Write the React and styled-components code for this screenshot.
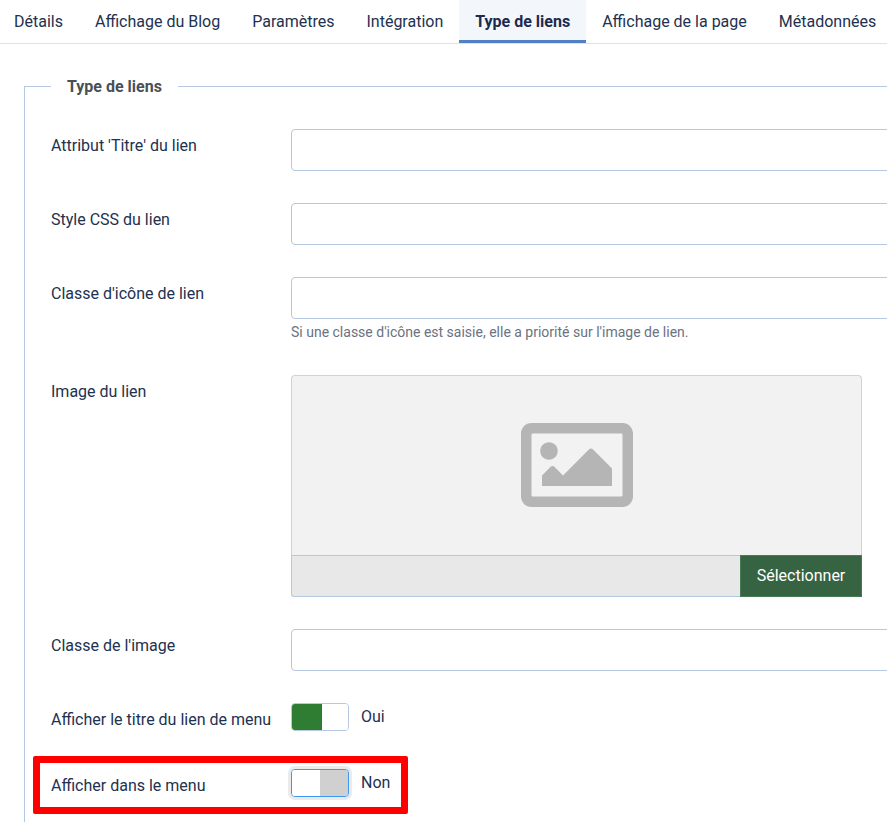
import React from "react";
import styled, { createGlobalStyle } from "styled-components";
import { FaRegImage } from "react-icons/fa";

const Global = createGlobalStyle`
  html, body { margin: 0; padding: 0; background: #fff; }
  body { font-family: Roboto, "Liberation Sans", sans-serif; font-size: 16px; line-height: 24px; color: #22314f; }
`;

const Page = styled.div`
  width: 887px;
  height: 822px;
  overflow: hidden;
`;

const TabBar = styled.nav`
  display: flex;
  width: 920px;
  height: 44px;
  margin-left: -2px;
  box-sizing: border-box;
  border-bottom: 1px solid #dfe3e9;
`;

const Tab = styled.div`
  padding: 4px 16px 0;
  height: 43px;
  box-sizing: border-box;
  display: flex;
  align-items: center;
  white-space: nowrap;
  font-weight: ${(p) => (p.$active ? 700 : 400)};
  background: ${(p) => (p.$active ? "#f3f6fa" : "transparent")};
  border-bottom: 3px solid ${(p) => (p.$active ? "#5280c4" : "transparent")};
  color: ${(p) => (p.$active ? "#1a2b4f" : "#22314f")};
`;

const Fieldset = styled.fieldset`
  margin: 29px 0 0 24px;
  width: 1000px;
  padding: 30px 26px 0;
  border: 0;
  border-top: 1px solid #b6c7e2;
  border-left: 1px solid #b6c7e2;
  box-sizing: border-box;
  min-width: 0;
`;

const Legend = styled.legend`
  margin-left: 0;
  padding: 2px 16px 0;
  font-weight: 700;
  color: #495057;
  line-height: 24px;
`;

const Row = styled.div`
  position: relative;
  display: grid;
  grid-template-columns: 240px 1fr;
  margin-bottom: ${(p) => p.$gap ?? 32}px;
`;

const Label = styled.label`
  padding-top: ${(p) => p.$top ?? 5}px;
  color: #22314f;
`;

const Input = styled.input`
  display: block;
  width: 100%;
  height: 42px;
  box-sizing: border-box;
  border: 1px solid #b6c7e2;
  border-radius: 4px;
  background: #fff;
`;

const Help = styled.div`
  font-size: 14px;
  line-height: 22px;
  margin-top: 2px;
  color: #6b7280;
`;

const MediaBox = styled.div`
  width: 571px;
  height: 222px;
  display: flex;
  flex-direction: column;
`;

const Preview = styled.div`
  flex: 1;
  display: flex;
  align-items: center;
  justify-content: center;
  box-sizing: border-box;
  padding-bottom: 2px;
  color: #b5b5b5;
  background: #f2f2f2;
  border: 1px solid #cfd2d6;
  border-bottom: 0;
  border-radius: 4px 4px 0 0;
`;

const MediaBar = styled.div`
  display: flex;
  height: 42px;
  box-sizing: border-box;
  background: #e8e8e8;
`;

const MediaPath = styled.div`
  flex: 1;
  border: 1px solid #b6c7e2;
  border-right: 0;
  border-radius: 0 0 0 4px;
`;

const SelectButton = styled.div`
  width: 122px;
  box-sizing: border-box;
  background: #366342;
  border: 1px solid #457a52;
  color: #fff;
  display: flex;
  align-items: center;
  justify-content: center;
`;

const SwitchRow = styled.div`
  display: flex;
  align-items: flex-start;
  gap: 12px;
`;

const Switch = styled.div`
  display: flex;
  width: 58px;
  height: 28px;
  box-sizing: border-box;
  border: 1px solid ${(p) => (p.$focus ? "#3f97f0" : "#b6c7e2")};
  border-radius: 4px;
  overflow: hidden;
  background: #fff;
  box-shadow: ${(p) => (p.$focus ? "0 0 0 3px #ebebeb" : "none")};
`;

const Half = styled.span`
  flex: ${(p) => (p.$width ? `0 0 ${p.$width}px` : 1)};
  background: ${(p) => p.$color || "#fff"};
`;

const SwitchText = styled.span`
  line-height: 28px;
`;

const Highlight = styled.div`
  position: absolute;
  left: -18px;
  top: -13px;
  width: 375px;
  height: 58px;
  box-sizing: border-box;
  border: 7px solid #ff0000;
  border-radius: 2px;
  pointer-events: none;
`;

const tabs = ["Détails", "Affichage du Blog", "Paramètres", "Intégration", "Type de liens", "Affichage de la page", "Métadonnées"];

export default function App() {
  return (
    <Page>
      <Global />
      <TabBar>
        {tabs.map((t) => (
          <Tab key={t} $active={t === "Type de liens"}>{t}</Tab>
        ))}
      </TabBar>
      <Fieldset>
        <Legend>Type de liens</Legend>
        <Row>
          <Label>Attribut 'Titre' du lien</Label>
          <Input />
        </Row>
        <Row>
          <Label>Style CSS du lien</Label>
          <Input />
        </Row>
        <Row>
          <Label>Classe d'icône de lien</Label>
          <div>
            <Input />
            <Help>Si une classe d'icône est saisie, elle a priorité sur l'image de lien.</Help>
          </div>
        </Row>
        <Row>
          <Label>Image du lien</Label>
          <MediaBox>
            <Preview><FaRegImage size={112} /></Preview>
            <MediaBar>
              <MediaPath />
              <SelectButton>Sélectionner</SelectButton>
            </MediaBar>
          </MediaBox>
        </Row>
        <Row>
          <Label>Classe de l'image</Label>
          <Input />
        </Row>
        <Row $gap={37}>
          <Label>Afficher le titre du lien de menu</Label>
          <SwitchRow>
            <Switch><Half $width={30} $color="#2f7d32" /><Half /></Switch>
            <SwitchText>Oui</SwitchText>
          </SwitchRow>
        </Row>
        <Row>
          <Label>Afficher dans le menu</Label>
          <SwitchRow>
            <Switch $focus><Half $width={28} /><Half $color="#d0d0d0" /></Switch>
            <SwitchText>Non</SwitchText>
          </SwitchRow>
          <Highlight />
        </Row>
      </Fieldset>
    </Page>
  );
}
